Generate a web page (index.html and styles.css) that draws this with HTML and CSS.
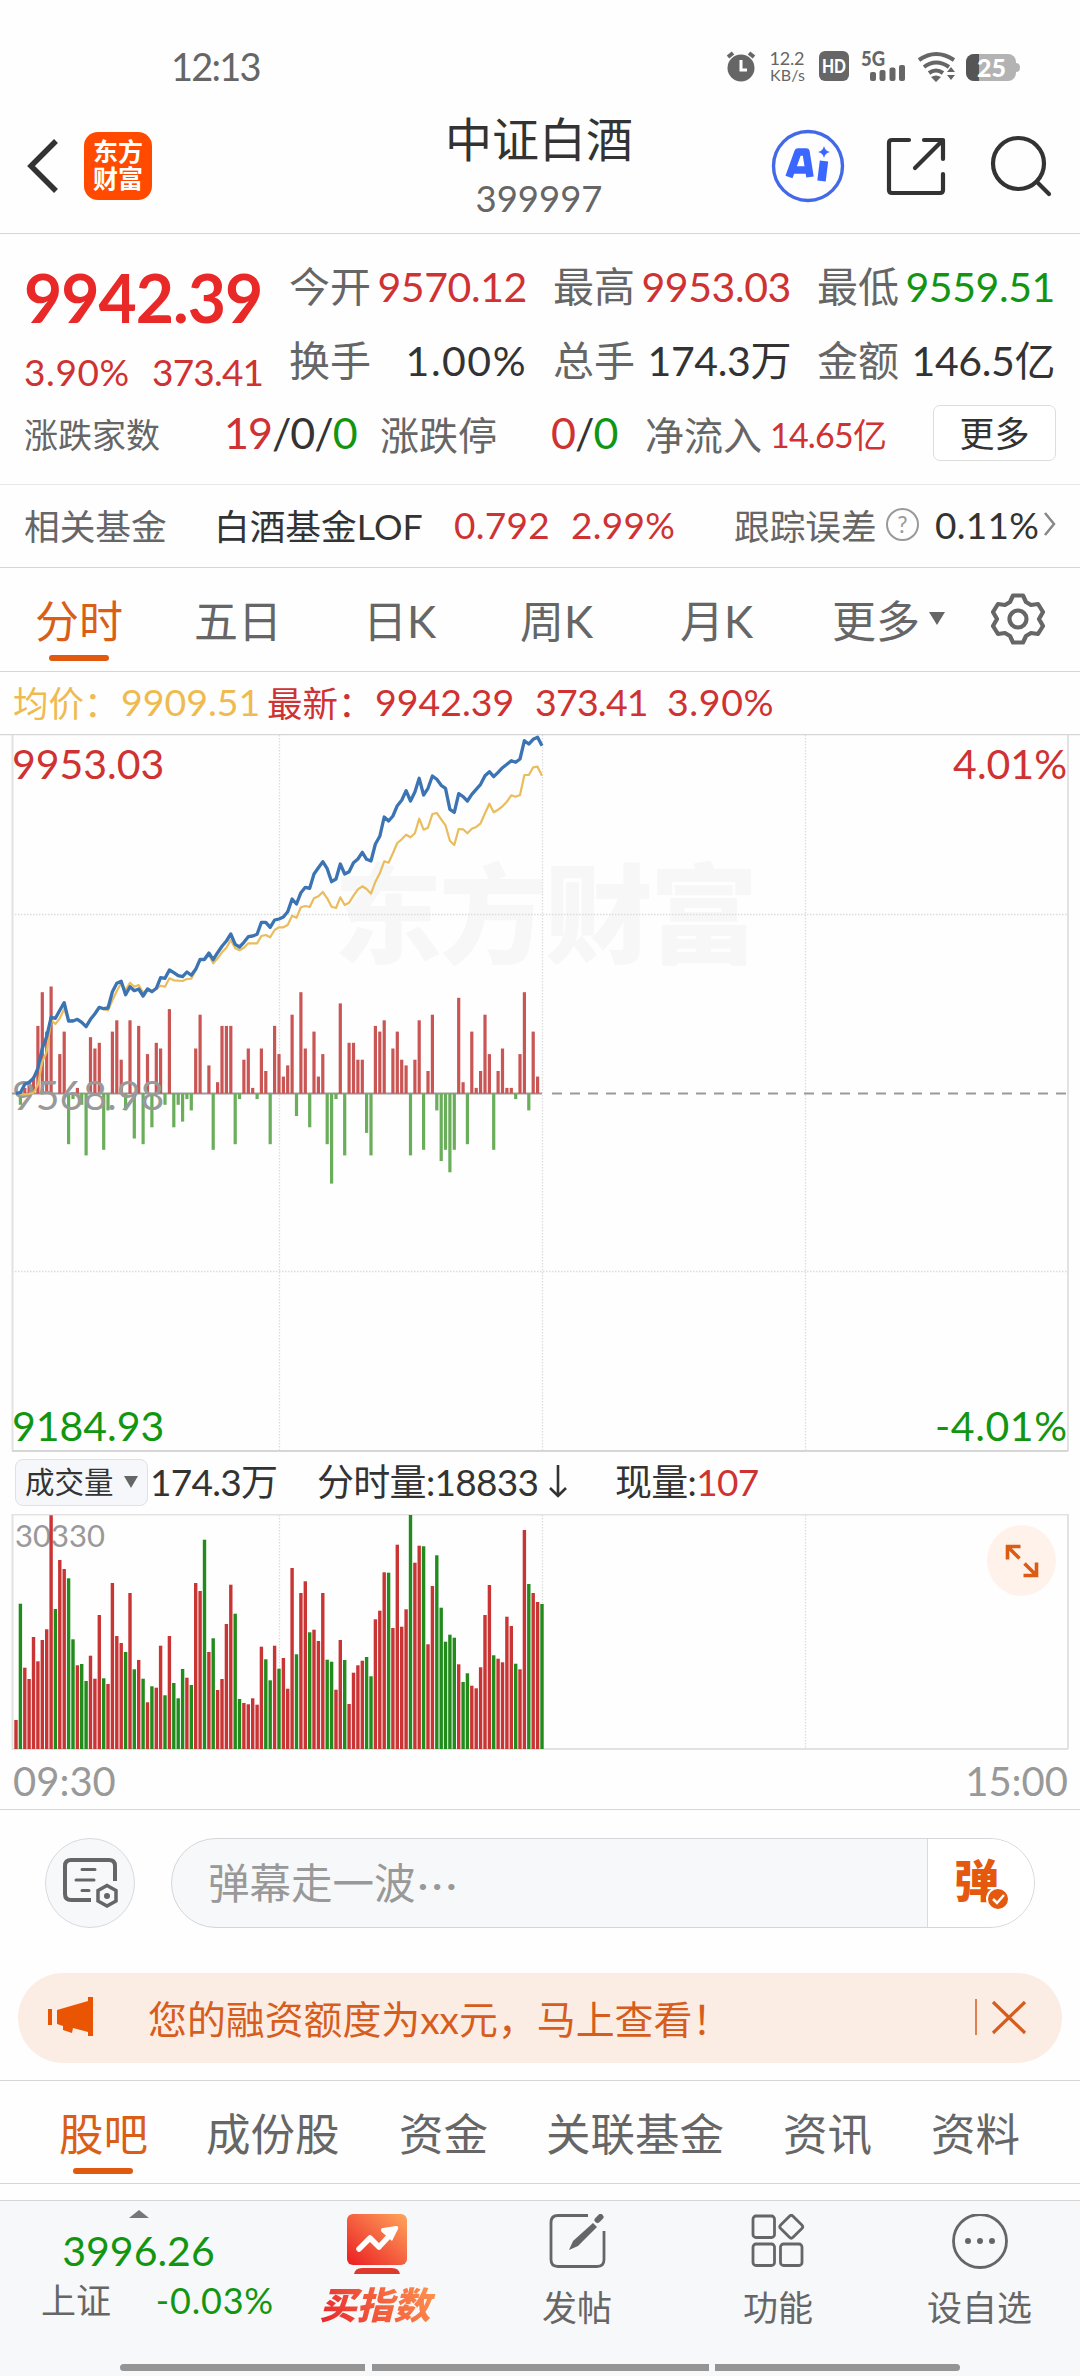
FILE: index.html
```html
<!DOCTYPE html>
<html lang="zh-CN">
<head>
<meta charset="utf-8">
<title>中证白酒 399997</title>
<link rel="stylesheet" href="styles.css">
</head>
<body>
<div class="status">
  <span class="clock">12:13</span>
  <svg class="status-icons" width="300" height="40" viewBox="720 46 300 40">
    <g fill="#666">
      <circle cx="741" cy="68" r="13.5"/>
      <path d="M728 57l5-4M754 57l-5-4" stroke="#666" stroke-width="4"/>
      <path d="M741 60v10h6" stroke="#fff" stroke-width="3" fill="none"/>
      <text x="769.500" y="65" font-size="18" textLength="35">12.2</text>
      <text x="770" y="81" font-size="16" textLength="35">KB/s</text>
      <rect x="819" y="51" width="30" height="30" rx="6"/>
      <text x="822" y="72.500" font-size="18" font-weight="900" fill="#fff" textLength="24" lengthAdjust="spacingAndGlyphs">HD</text>
      <text x="861" y="66" font-size="20" font-weight="900" textLength="24" lengthAdjust="spacingAndGlyphs">5G</text>
      <rect x="870" y="72" width="6" height="9" rx="2"/><rect x="879.500" y="70" width="6" height="11" rx="2"/><rect x="889.500" y="67.500" width="6" height="13.500" rx="2"/><rect x="899" y="65" width="6" height="16" rx="2"/>
      <g fill="none" stroke="#666" stroke-width="4"><path d="M919 60q17-12 35 0"/><path d="M924 67q12-9 25 0"/><path d="M929 73q7-5 14 0"/></g>
      <path d="M931 77q5-3 10 0l-5 5zM947 72l4-5 4 5zM947 75l4 5 4-5z"/>
    </g>
    <rect x="966" y="54" width="50" height="27" rx="8" fill="#b3b3b3"/><path d="M1016 63q4 0 4 4.500t-4 4.500z" fill="#b3b3b3"/>
    <path d="M979 54h-5a8 8 0 0 0-8 8v11a8 8 0 0 0 8 8h5z" fill="#555"/>
    <text x="977" y="77" font-size="25" font-weight="900" fill="#fff" textLength="29">25</text>
  </svg>
</div>
<header class="header">
  <svg class="back" width="34" height="60" viewBox="0 0 34 60" fill="none" stroke="#333" stroke-width="5.500"><path d="M30 5L5 30l25 25"/></svg>
  <div class="logo"><span>东方</span><span>财富</span></div>
  <div class="title"><h1>中证白酒</h1><p>399997</p></div>
  <svg class="actions" width="290" height="80" viewBox="765 126 290 80" fill="none" stroke="#333" stroke-width="4.200">
    <circle cx="808" cy="166" r="34.500" stroke="#4269e8" stroke-width="3.400"/>
    <path d="M789 177l9-25h8l4 25M794 170h14" stroke="#3a67ff" stroke-width="7.500" stroke-linejoin="round"/>
    <path d="M824 161l-2.500 20" stroke="#3a67ff" stroke-width="8.500"/>
    <path d="M824 146q1 5 6 6-5 1-6 6-1-5-6-6 5-1 6-6z" fill="#3a67ff" stroke="none"/>
    <path d="M909 140h-17q-3 0-3 3v47q0 3 3 3h48q3 0 3-3v-16M924 140h19v19M942 141l-27 27" stroke-linecap="round" stroke-linejoin="round"/>
    <circle cx="1018.500" cy="163.500" r="25.500"/><path d="M1037 182l12 12" stroke-linecap="round"/>
  </svg>
</header>

<section class="quote">
  <div class="price">
    <strong>9942.39</strong>
    <div class="change"><span>3.90%</span><span>373.41</span></div>
  </div>
  <dl class="facts">
    <dt>今开</dt><dd class="up">9570.12</dd><dt>最高</dt><dd class="up">9953.03</dd><dt>最低</dt><dd class="down">9559.51</dd>
    <dt>换手</dt><dd class="wide">1.00%</dd><dt>总手</dt><dd>174.3万</dd><dt>金额</dt><dd>146.5亿</dd>
  </dl>
  <div class="breadth">
    <span class="small">涨跌家数</span>
    <b><i class="up">19</i>/0/<i class="down">0</i></b>
    <span>涨跌停</span>
    <b><i class="up">0</i>/<i class="down">0</i></b>
    <span>净流入</span>
    <em class="up">14.65亿</em>
    <button class="more">更多</button>
  </div>
</section>

<section class="fund">
  <span class="muted">相关基金</span><span class="fund-name">白酒基金LOF</span><span class="up num">0.792</span><span class="up num">2.99%</span>
  <span class="muted">跟踪误差</span><span class="help">?</span><span class="num">0.11%</span>
  <svg width="12" height="26" viewBox="0 0 12 26" fill="none" stroke="#888" stroke-width="2.500"><path d="M1 2l9 11-9 11"/></svg>
</section>

<nav class="periods">
  <a class="active">分时</a><a>五日</a><a>日K</a><a>周K</a><a>月K</a><a>更多</a>
  <svg width="16" height="14" viewBox="0 0 16 14"><path d="M0 0h16L8 13z" fill="#666"/></svg>
  <svg class="gear" width="54" height="54" viewBox="-27 -27 54 54" fill="none" stroke="#666" stroke-width="4.200" stroke-linejoin="round"><path d="M-5-23.500H5L8-17 13-14l7-1 5 8-4 7 4 7-5 8-7-1-5 3-3 6.500H-5L-8 17l-5-3-7 1-5-8 4-7-4-7 5-8 7 1 5-3z"/><circle r="8.500"/></svg>
</nav>

<div class="legend"><span class="avg">均价：</span><span class="avg">9909.51</span><span>最新：</span><span>9942.39</span><span>373.41</span><span>3.90%</span></div>

<svg class="chart" width="1080" height="718" viewBox="0 0 1080 718">
  <text class="watermark" x="334" y="221" textLength="424">东方财富</text>
  <g class="grid"><path d="M279.500 1V716M542.500 1V716M805.500 1V716M12 180.500H1068M12 537.500H1068"/></g>
  <path class="frame" d="M12.500 0V717M1068 0V717"/>
  <path class="edge" d="M0 .5H1080"/><path class="edge thick" d="M12 717H1068"/>
  <text class="axis up" x="12" y="45">9953.03</text><text class="axis up end" x="1067" y="45">4.01%</text>
  <text class="axis down" x="12" y="707">9184.93</text><text class="axis down end" x="1067" y="707" textLength="132">-4.01%</text>
  <path class="zero" d="M12 359.500H542"/><path class="zero dashed" d="M552 359.500H1066"/>
  <g id="breadth"></g>
  <text class="axis base" x="12" y="376">9568.98</text>
  <polyline id="average"/><polyline id="latest"/>
</svg>

<div class="volume-bar">
  <button class="indicator">成交量<svg width="16" height="13" viewBox="0 0 16 13"><path d="M1 0h14L8 12z" fill="#666"/></svg></button>
  <span>174.3万</span><span>分时量:18833</span>
  <svg width="20" height="36" viewBox="0 0 20 36" fill="none" stroke="#333" stroke-width="2.600"><path d="M10 1v31M2 24l8 8 8-8"/></svg>
  <span>现量:<i class="up">107</i></span>
</div>

<div class="volume">
  <svg class="chart" width="1080" height="237" viewBox="0 0 1080 237">
    <g class="grid"><path d="M279.500 1V235M542.500 1V235M805.500 1V235"/></g>
    <path class="frame" d="M12.500 0V235M1068 0V235M12 .5H1068M12 235H1068"/>
    <text class="axis volume-max" x="15" y="33">30330</text>
    <g id="volume"></g>
  </svg>
  <div class="expand"><svg width="36" height="36" viewBox="0 0 36 36" fill="none" stroke="#dd5c14" stroke-width="3.600"><path d="M3.500 16.500V3.500H16.500M4 4l11.500 11.500M32.500 19.500v13H19.500M32 32L20.500 20.500"/></svg></div>
</div>
<div class="times"><span>09:30</span><span>15:00</span></div>

<section class="danmaku">
  <div class="round"><svg width="56" height="52" viewBox="0 0 56 52" fill="none" stroke="#666" stroke-width="4"><path d="M29 43H9q-6 0-6-6V9q0-6 6-6h38q6 0 6 6v15"/><path d="M20 12.500h13M14 23h18M20 33.500h7" stroke-linecap="round" stroke-width="3"/><path d="M45 28.500l9 5v10.500l-9 5-9-5V33.500z" stroke-width="3.500"/><circle cx="45" cy="39" r="3" fill="#666" stroke="none"/></svg></div>
  <div class="field"><span class="hint">弹幕走一波<i>···</i></span><span class="toggle">弹<svg width="24" height="24" viewBox="0 0 24 24"><circle cx="12" cy="12" r="11" fill="#e4590e" stroke="#fff" stroke-width="2"/><path d="M7 12l4 4 7-8" fill="none" stroke="#fff" stroke-width="2.500"/></svg></span></div>
</section>

<section class="banner">
  <svg width="46" height="40" viewBox="0 0 46 40" fill="#ea5504"><path d="M0 12h4v16H0zM9 13l31-9V0h5v39h-5v-4l-15-4-1 5-9-3v-4l-6-2z"/></svg>
  <span>您的融资额度为xx元，马上查看！</span>
  <svg class="close" width="52" height="38" viewBox="0 0 52 38" fill="none" stroke="#d65d1d"><path d="M1 1v36" stroke-width="1.500"/><path d="M18 4l32 31M50 4L18 35" stroke-width="3.200"/></svg>
</section>

<nav class="sections"><a class="active">股吧</a><a>成份股</a><a>资金</a><a>关联基金</a><a>资讯</a><a>资料</a></nav>

<footer class="dock">
  <div class="index">
    <svg width="20" height="8" viewBox="0 0 20 8"><path d="M0 8L10 0l10 8z" fill="#777"/></svg>
    <b>3996.26</b>
    <div><span>上证</span><i>-0.03%</i></div>
  </div>
  <div class="item buy">
    <svg width="60" height="60" viewBox="0 0 60 60"><defs><linearGradient id="warm" x1="0" y1="1" x2="1" y2="0"><stop offset="0" stop-color="#ea1d22"/><stop offset="1" stop-color="#ffa55c"/></linearGradient></defs><rect width="60" height="51" rx="6" fill="url(#warm)"/><path d="M7 60q1-6 8-6h30q7 0 8 6z" fill="#dd3a2c"/><path d="M12 35l11-11 9 9 12-13" fill="none" stroke="#fff" stroke-width="5.500" stroke-linecap="round" stroke-linejoin="round"/><path d="M34 16q0-2 2-2l13-2q3 0 2 3l-6 12-9-8q-2-1-2-3z" fill="#fff"/></svg>
    <span>买指数</span>
  </div>
  <div class="item"><svg width="60" height="60" viewBox="0 0 60 60" fill="none" stroke="#666" stroke-width="2.800"><path d="M41 1.500H11q-7 0-7 7v37q0 7 7 7h39q7 0 7-7V17"/><path d="M22 36l4-9 20-18 4 4-19 19z" fill="#666" stroke="none"/><path d="M50.500 6l3-3" stroke-width="6" stroke-linecap="round"/></svg><span>发帖</span></div>
  <div class="item"><svg width="60" height="60" viewBox="0 0 60 60" fill="none" stroke="#666" stroke-width="2.800"><rect x="5" y="2" width="21.500" height="21.500" rx="3"/><rect x="5" y="30" width="21.500" height="21.500" rx="3"/><rect x="32.500" y="30" width="21.500" height="21.500" rx="3"/><rect x="34.500" y="4" width="17.500" height="17.500" rx="2.500" transform="rotate(45 43.250 12.750)"/></svg><span>功能</span></div>
  <div class="item"><svg width="60" height="60" viewBox="0 0 60 60" fill="none" stroke="#666" stroke-width="2.800"><circle cx="30" cy="27" r="26.500"/><g fill="#666" stroke="none"><circle cx="18" cy="27" r="3"/><circle cx="30" cy="27" r="3"/><circle cx="42" cy="27" r="3"/></g></svg><span>设自选</span></div>
  <div class="home"><i></i><i></i><i></i></div>
</footer>
<script src="chart.js"></script>
</body>
</html>
```
FILE: styles.css
```css
* { box-sizing: border-box; margin: 0; padding: 0; }
body { width: 1080px; height: 2376px; overflow: hidden; background: #fefefe; color: #333; font-family: Lato, "Noto Sans CJK SC", sans-serif; display: flex; flex-direction: column; }
body > * { flex: none; }
svg { display: block; }
i, em { font-style: normal; }
b { font-weight: 400; }
button { font: inherit; color: inherit; }
.up { color: #cf3232; fill: #cf3232; }
.down { color: #129612; fill: #129612; }
.muted { color: #666; }

.status { height: 104px; padding: 46px 60px 0 171px; display: flex; justify-content: space-between; }
.clock { font-size: 38px; line-height: 40px; color: #666; letter-spacing: -1.800px; }

.header { height: 130px; border-bottom: 1.500px solid #d6d6d6; display: grid; grid-template-columns: 58px 68px 644px 290px; padding: 0 0 6px 26px; align-items: center; }
.logo { width: 68px; height: 68px; border-radius: 14px; background: #ff4a00; color: #fff; font-weight: 700; font-size: 25px; line-height: 27px; display: flex; flex-direction: column; align-items: center; justify-content: center; padding-bottom: 2px; }
.title { margin-left: 130px; text-align: center; }
.title h1 { font-weight: 400; font-size: 47px; line-height: 58px; padding-top: 6px; white-space: nowrap; }
.title p { color: #666; font-size: 36.500px; line-height: 60px; height: 60px; }
.actions { margin-left: -31px; }

.quote { height: 251px; padding: 26px 24px 0; display: grid; grid-template-columns: 265px 767px; grid-template-rows: 144px 58px; border-bottom: 1.500px solid #e9e9e9; }
.price { color: #cf3232; }
.price strong { display: block; font-size: 66px; line-height: 76px; letter-spacing: -1px; color: #e92828; }
.change { font-size: 37px; line-height: 60px; margin-top: 6px; display: grid; grid-template-columns: 128px auto; letter-spacing: -.8px; }
.change span:first-child { letter-spacing: .6px; }
.facts { margin-top: -10px; display: grid; grid-template-columns: 84px 154px 26px 84px 154px 26px 84px 154px; grid-auto-rows: 74px; align-items: center; font-size: 41px; line-height: 66px; white-space: nowrap; }
.facts dt { color: #666; }
.facts dd { text-align: right; letter-spacing: -.4px; }
.facts .wide { letter-spacing: 1.500px; }
.facts dd:nth-of-type(3n+1), .facts dd:nth-of-type(3n+2) { grid-column-end: span 2; padding-right: 26px; }
.breadth { grid-column: 1 / 3; display: grid; grid-template-columns: 200px 156px 171px 94px 125px 163px 123px; align-items: center; font-size: 39px; color: #666; white-space: nowrap; }
.breadth b { font-size: 43px; line-height: 50px; color: #333; letter-spacing: -1px; }
.breadth .small { font-size: 34px; }
.breadth em { font-size: 34px; letter-spacing: -.8px; }
.more { height: 56px; border: 1.500px solid #ddd; border-radius: 7px; background: #fff; font-size: 35px; line-height: 48px; color: #333; }

.fund { height: 83px; border-bottom: 1.500px solid #d6d6d6; padding: 0 24px 4px; display: grid; grid-template-columns: 190px 240px 117px 163px 152px 49px 109px 12px; align-items: center; font-size: 35.700px; white-space: nowrap; }
.num { font-size: 37px; letter-spacing: .3px; }
.help { width: 33px; height: 33px; border: 2.500px solid #999; border-radius: 50%; color: #999; font-size: 23px; line-height: 28px; text-align: center; }

.periods { height: 104px; border-bottom: 1.500px solid #d6d6d6; padding-left: 35px; display: grid; grid-template-columns: 159px 169px 157px 160px 152px 97px 62px 60px; align-items: center; font-size: 44px; color: #666; padding-bottom: 2px; }
.active { color: #d95f18; position: relative; }
.active::after { content: ""; position: absolute; left: 14px; bottom: -10px; width: 60px; height: 6px; border-radius: 3px; background: #e0590f; }

.legend { height: 62px; padding: 0 0 3px 13px; display: grid; grid-template-columns: 108px 146px 108px 160px 132px auto; align-items: center; font-size: 37.500px; color: #cf3232; white-space: nowrap; }
.legend span:nth-child(odd) { font-size: 35.500px; }
.legend span:last-child { font-size: 37.500px; letter-spacing: .6px; }
.legend span:nth-child(5) { font-size: 37.500px; letter-spacing: -.8px; }
.legend .avg { color: #efbb50; }

.grid { fill: none; stroke: #dcdcdc; stroke-width: 1.300; stroke-dasharray: 1.500 1.500; }
.frame { fill: none; stroke: #e2e2e2; stroke-width: 2; }
.edge { fill: none; stroke: #d6d6d6; stroke-width: 1.500; }
.thick { stroke-width: 2; }
.zero { fill: none; stroke: #999; stroke-width: 1.800; }
.dashed { stroke-dasharray: 10 8; }
.axis { font-size: 41px; }
.end { text-anchor: end; }
.base { fill: #999; }
.watermark { font-size: 108px; font-weight: 900; fill: #f7f7f7; }
#average { fill: none; stroke: #eabc5c; stroke-width: 2.200; stroke-linejoin: round; }
#latest { fill: none; stroke: #3b73b3; stroke-width: 3.300; stroke-linejoin: round; }
.volume-max { font-size: 31px; fill: #999; }

.volume-bar { height: 62px; padding-left: 15px; display: grid; grid-template-columns: 135px 167px 231px 67px auto; align-items: center; font-size: 37px; line-height: 56px; white-space: nowrap; padding-bottom: 2px; letter-spacing: -.7px; }
.indicator { width: 133px; height: 47px; border: 1.500px solid #dfe1e6; border-radius: 8px; background: #f6f7fa; font-size: 29.500px; line-height: 40px; letter-spacing: 0; display: flex; align-items: center; gap: 9px; padding-left: 9px; }
.volume { position: relative; height: 237px; }
.expand { position: absolute; left: 987px; top: 11px; width: 69px; height: 71px; border-radius: 50%; background: #fff2ea; display: grid; place-items: center; }
.times { height: 59px; border-bottom: 1.500px solid #d6d6d6; padding: 6px 12px 0 13px; display: flex; justify-content: space-between; font-size: 40px; line-height: 48px; color: #999; }

.danmaku { height: 163px; padding: 28px 45px 0; display: flex; gap: 36px; align-items: flex-start; }
.round { width: 90px; height: 90px; border: 1.500px solid #d8dae0; border-radius: 50%; background: #f7f8fa; display: grid; place-items: center; }
.field { flex: 1; height: 90px; border: 1.500px solid #d4d6da; border-radius: 45px; background: #f7f8fa; overflow: hidden; display: flex; }
.hint { flex: 1; padding-left: 36px; font-size: 41.500px; line-height: 88px; color: #999; }
.hint i { letter-spacing: 3.500px; margin-left: 2px; }
.toggle { position: relative; width: 107px; border-left: 1.500px solid #d8dae0; background: #fff; color: #e4590e; font-weight: 900; font-size: 45px; line-height: 84px; padding-left: 26px; }
.toggle svg { position: absolute; left: 58px; top: 48px; }

.banner { height: 90px; margin: 0 18px; border-radius: 45px; background: #fcede4; color: #d65d1d; display: grid; grid-template-columns: 100px 827px 52px; align-items: center; padding: 0 0 2px 30px; font-size: 38.900px; white-space: nowrap; }

.sections { margin-top: 17px; height: 104px; border-top: 1.500px solid #d6d6d6; border-bottom: 1.500px solid #d6d6d6; padding: 0 0 2px 59px; display: grid; grid-template-columns: 147px 193px 147px 237px 148px auto; align-items: center; font-size: 44.500px; color: #666; white-space: nowrap; }

.dock { margin-top: 16px; height: 176px; border-top: 1.500px solid #d6d6d6; background: #f7f8fa; display: grid; grid-template-columns: 277px 200px 200px 202px 201px; grid-template-rows: 163px 8px; color: #666; }
.index { padding-top: 9px; display: flex; flex-direction: column; align-items: center; color: #129612; }
.index b { font-size: 41px; line-height: 50px; margin: 8px 0 0; }
.index div { display: flex; justify-content: space-between; width: 233px; margin-left: 38px; font-size: 36px; line-height: 48px; }
.index i { letter-spacing: .8px; }
.index span { color: #666; font-size: 35px; }
.item { display: flex; flex-direction: column; align-items: center; padding-top: 13px; font-size: 35px; line-height: 50px; }
.item span { margin-top: 8px; }
.buy span { font-weight: 900; font-style: italic; font-size: 37px; background: linear-gradient(60deg, #e6202a, #ff9a50); -webkit-background-clip: text; color: transparent; line-height: 46px; padding: 0 8px 0 4px; }
.home { grid-column: 1 / 6; display: grid; grid-template-columns: 245px 337px 245px; gap: 6.500px; padding-left: 120px; }
.home i { background: #959595; height: 7px; }
.home i:first-child { border-radius: 4px 0 0 4px; }
.home i:last-child { border-radius: 0 4px 4px 0; }
```
FILE: chart.js
```js
// One entry per minute from 09:30 to 11:30; x advances 4.383px per minute.
const X0 = 16, STEP = 4.383;
const x = i => X0 + i * STEP;

// Levels are measured in thirds of a pixel.
const latest = [1105,1103,1078,1072,1060,1030,970,935,877,880,856,833,888,888,883,892,905,883,866,847,851,849,800,775,769,809,785,797,792,813,792,800,790,758,760,735,743,752,755,741,751,733,703,703,684,704,683,664,648,627,658,666,652,635,633,628,592,592,607,585,582,576,560,522,537,503,487,490,447,428,410,431,470,462,417,447,440,413,402,382,403,408,357,334,276,288,273,242,226,197,228,201,160,210,190,153,163,181,190,253,262,206,215,228,208,193,178,152,140,155,142,128,118,107,112,102,47,57,43,37,62];
const average = [1105,1108,1108,1107,1103,1080,1010,980,885,897,880,852,888,887,884,890,903,883,868,848,853,856,826,798,775,795,773,785,780,803,793,798,792,782,785,760,766,767,768,762,761,735,706,706,690,715,700,682,668,645,670,676,668,655,655,655,633,630,637,615,607,607,600,572,578,547,543,546,520,514,501,520,545,549,517,540,533,512,493,484,492,506,470,445,409,413,385,354,343,329,337,325,281,314,308,267,264,283,301,347,360,312,313,325,311,306,295,265,236,262,254,244,230,211,215,210,150,150,127,125,152];
const breadth = [0,-2,1,2,3,12,18,11,19,0,7,11,-9,-1,1,-2,-11,10,8,9,-10,-3,11,13,6,-3,13,-8,12,-9,7,-6,9,8,-2,15,-6,-2,-5,-1,-3,8,14,0,5,-10,2,12,12,12,-9,-1,6,8,1,-1,8,4,-9,12,7,3,5,14,-4,18,8,-6,11,3,7,-9,-16,-1,16,-11,9,9,6,6,-7,-11,12,11,13,0,8,11,6,5,-11,6,13,-10,4,14,-3,-12,-10,-14,-10,17,2,-9,11,1,4,14,7,-10,4,8,1,1,-1,7,18,-3,11,3,0];
const volume = '960r 611g 803r 837r 711r 784r 720r 688r 346r 627g 480r 507r 535g 718g 796r 792g 843g 767r 836r 645r 835g 852r 549r 708r 729r 756g 579r 808g 780r 836g 907r 859g 863r 737r 886g 708r 849g 895g 807g 833r 855g 549r 573r 419g 756r 715g 870r 837r 672r 554r 641g 897g 909r 913r 895r 914r 740r 778g 841g 737r 806g 774r 866r 504r 763g 579r 544r 697g 689r 723r 579r 779g 785g 869r 720r 780g 912r 818r 796r 782r 771g 829g 658r 632r 517r 518g 684r 434r 680r 628r 345g 488r 437r 439g 733r 558r 466g 623g 725g 704g 713g 793r 846g 820g 857r 865r 802r 645r 555r 766g 776r 787r 650r 678r 791g 808r 390r 552g 579r 606r 612g'.split(' ');

const line = (id, data) => document.getElementById(id)
  .setAttribute('points', data.map((v, i) => `${x(i).toFixed(1)},${(v / 3 - 9).toFixed(1)}`).join(' '));
line('latest', latest);
line('average', average);

const bar = (i, top, height, width, color) =>
  `<rect x="${(x(i) - width / 2).toFixed(1)}" y="${top.toFixed(1)}" width="${width}" height="${height.toFixed(1)}" fill="${color}"/>`;

document.getElementById('breadth').innerHTML = breadth.map((v, i) => {
  const h = Math.abs(v) * 5.63;
  return v > 0 ? bar(i, 359.5 - h, h, 3.2, '#c95555') : v < 0 ? bar(i, 359.5, h, 3.2, '#6aad5a') : '';
}).join('');

document.getElementById('volume').innerHTML = volume.map((v, i) => {
  const top = parseInt(v, 10) / 3 - 114;
  return bar(i, top, 235 - top, 3.4, v.endsWith('r') ? '#c93434' : '#218b1b');
}).join('');
```
